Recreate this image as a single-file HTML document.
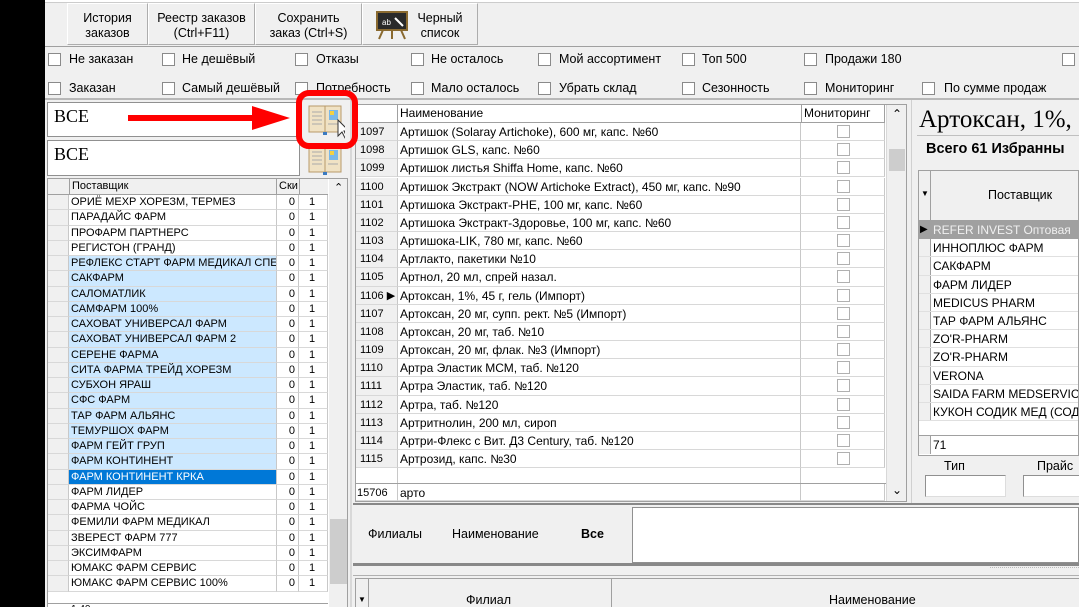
<!DOCTYPE html>
<html style="width:1079px;height:607px;overflow:hidden"><head><meta charset="utf-8"><style>
*{box-sizing:border-box;margin:0;padding:0}
body{width:1079px;height:607px;overflow:hidden;background:#000;font-family:"Liberation Sans","DejaVu Sans",sans-serif;font-size:12px;color:#000;position:relative}
.a{position:absolute}
.app{position:absolute;left:45px;top:0;width:1034px;height:607px;background:#f0f0f0;overflow:hidden}
.btn{position:absolute;top:3px;height:42px;background:#f0f0f0;border:1px solid #adadad;border-top-color:#fff;border-left-color:#fff;text-align:center;font-size:12.5px;line-height:15px;padding-top:7px;color:#000}
.cb{position:absolute;width:13px;height:13px;border:1px solid #8a8a8a;background:#fff}
.lbl{position:absolute;font-size:12.5px;white-space:nowrap}
.g{position:absolute;background:#fff;border:1px solid #a0a0a0;overflow:hidden}
.row{position:absolute;left:0;height:15.25px;font-size:11px;line-height:15px;white-space:nowrap}
.c{position:absolute;top:0;height:100%;border-right:1px solid #c8c8c8;border-bottom:1px solid #d8d8d8;overflow:hidden}
.mr{position:absolute;left:0;height:18.17px;line-height:18px;font-size:12px;white-space:nowrap}
.chk{position:absolute;width:13px;height:13px;border:1px solid #b0b0b0;background:#fff;left:36px;top:2px}
.rr{position:absolute;left:0;height:18.2px;line-height:18px;font-size:12px;white-space:nowrap;width:170px}
</style></head><body>
<div class="app">
<div class="a" style="left:0;top:0;width:1034px;height:3px;background:#fff;border-bottom:1px solid #ccc"></div>
<div class="btn" style="left:22px;width:81px">История<br>заказов</div>
<div class="btn" style="left:103px;width:107px">Реестр заказов<br>(Ctrl+F11)</div>
<div class="btn" style="left:210px;width:107px">Сохранить<br>заказ (Ctrl+S)</div>
<div class="btn" style="left:317px;width:116px;padding-left:40px">Черный<br>список</div>
<svg class="a" style="left:330px;top:10px" width="34" height="30"><rect x="2" y="2" width="30" height="18" fill="#2a2a2a" stroke="#8a6a30" stroke-width="2"/><text x="7" y="15" font-size="8" fill="#fff" font-family="Liberation Sans">ab</text><path d="M20 8l8 8" stroke="#fff" stroke-width="2"/><path d="M8 20l-4 9M26 20l4 9M17 20v9" stroke="#8a6a30" stroke-width="2"/></svg>
<div class="a" style="left:0;top:46px;width:1034px;height:1px;background:#a0a0a0"></div>

<div class="cb" style="left:3px;top:53px"></div><div class="lbl" style="left:24px;top:52px">Не заказан</div>
<div class="cb" style="left:117px;top:53px"></div><div class="lbl" style="left:137px;top:52px">Не дешёвый</div>
<div class="cb" style="left:250px;top:53px"></div><div class="lbl" style="left:271px;top:52px">Отказы</div>
<div class="cb" style="left:366px;top:53px"></div><div class="lbl" style="left:386px;top:52px">Не осталось</div>
<div class="cb" style="left:493px;top:53px"></div><div class="lbl" style="left:514px;top:52px">Мой ассортимент</div>
<div class="cb" style="left:637px;top:53px"></div><div class="lbl" style="left:657px;top:52px">Топ 500</div>
<div class="cb" style="left:759px;top:53px"></div><div class="lbl" style="left:780px;top:52px">Продажи 180</div>
<div class="cb" style="left:1017px;top:53px"></div>

<div class="cb" style="left:3px;top:82px"></div><div class="lbl" style="left:24px;top:81px">Заказан</div>
<div class="cb" style="left:117px;top:82px"></div><div class="lbl" style="left:137px;top:81px">Самый дешёвый</div>
<div class="cb" style="left:250px;top:82px"></div><div class="lbl" style="left:271px;top:81px">Потребность</div>
<div class="cb" style="left:366px;top:82px"></div><div class="lbl" style="left:386px;top:81px">Мало осталось</div>
<div class="cb" style="left:493px;top:82px"></div><div class="lbl" style="left:514px;top:81px">Убрать склад</div>
<div class="cb" style="left:637px;top:82px"></div><div class="lbl" style="left:657px;top:81px">Сезонность</div>
<div class="cb" style="left:759px;top:82px"></div><div class="lbl" style="left:780px;top:81px">Мониторинг</div>
<div class="cb" style="left:877px;top:82px"></div><div class="lbl" style="left:899px;top:81px">По сумме продаж</div>
<div class="a" style="left:0;top:98px;width:1034px;height:2px;background:#b8b8b8"></div>

<div class="a" style="left:2px;top:102px;width:253px;height:35px;background:#fff;border:1px solid #909090;font-family:'Liberation Serif',serif;font-size:18px;padding:3px 6px">ВСЕ</div>
<div class="a" style="left:2px;top:140px;width:253px;height:36px;background:#fff;border:1px solid #909090;font-family:'Liberation Serif',serif;font-size:18px;padding:3px 6px">ВСЕ</div>
<svg class="a" style="left:260px;top:102px" width="40" height="80">
<g><rect x="4" y="4" width="32" height="26" fill="#f0e2c4" stroke="#b79a6a"/><line x1="20" y1="4" x2="20" y2="30" stroke="#b79a6a"/><path d="M7 10h10M7 14h10M7 18h10M7 22h10M23 22h10" stroke="#aaa"/><rect x="24" y="8" width="9" height="10" fill="#7ab8e8"/><rect x="25" y="9" width="4" height="4" fill="#f5d040"/><rect x="18" y="30" width="4" height="3" fill="#3a7ac0"/></g>
<g transform="translate(0,40)"><rect x="4" y="4" width="32" height="26" fill="#f0e2c4" stroke="#b79a6a"/><line x1="20" y1="4" x2="20" y2="30" stroke="#b79a6a"/><path d="M7 10h10M7 14h10M7 18h10M7 22h10M23 22h10" stroke="#aaa"/><rect x="24" y="8" width="9" height="10" fill="#7ab8e8"/><rect x="25" y="9" width="4" height="4" fill="#f5d040"/><rect x="18" y="30" width="4" height="3" fill="#3a7ac0"/></g>
<path d="M33 18l0 16 4-4 3 6 2-1-3-6 5 0z" fill="#fff" stroke="#333"/>
</svg>

<div class="g" style="left:2px;top:178px;width:301px;height:432px">
<div class="a" style="left:0;top:0;width:280px;height:16px;background:#f0f0f0;border-bottom:1px solid #a0a0a0;font-size:11px;line-height:15px">
<span class="a" style="left:21px;top:0;width:208px;height:16px;border-left:1px solid #a0a0a0;border-right:1px solid #a0a0a0;padding-left:2px">Поставщик</span><span class="a" style="left:230px;padding-left:1px">Ски</span><span class="a" style="left:251px;top:0;height:16px;border-left:1px solid #a0a0a0"></span></div>
<div class="a" style="left:281px;top:0;width:19px;height:432px;background:#f0f0f0"><div class="a" style="left:5px;top:2px;font-size:11px">&#8963;</div><div class="a" style="left:1px;top:340px;width:17px;height:65px;background:#cdcdcd"></div></div>
<div class="a" style="left:0;top:16px;width:280px">
<div class="row" style="top:0"><span class="c" style="left:0;width:21px;background:#f0f0f0"></span><span class="c" style="left:21px;width:208px;padding-left:2px">ОРИЁ МЕХР ХОРЕЗМ, ТЕРМЕЗ</span><span class="c" style="left:229px;width:22px;text-align:right;padding-right:3px">0</span><span class="c" style="left:251px;width:29px;padding-left:10px">1</span></div>
<div class="row" style="top:15.25px"><span class="c" style="left:0;width:21px;background:#f0f0f0"></span><span class="c" style="left:21px;width:208px;padding-left:2px">ПАРАДАЙС ФАРМ</span><span class="c" style="left:229px;width:22px;text-align:right;padding-right:3px">0</span><span class="c" style="left:251px;width:29px;padding-left:10px">1</span></div>
<div class="row" style="top:30.5px"><span class="c" style="left:0;width:21px;background:#f0f0f0"></span><span class="c" style="left:21px;width:208px;padding-left:2px">ПРОФАРМ ПАРТНЕРС</span><span class="c" style="left:229px;width:22px;text-align:right;padding-right:3px">0</span><span class="c" style="left:251px;width:29px;padding-left:10px">1</span></div>
<div class="row" style="top:45.75px"><span class="c" style="left:0;width:21px;background:#f0f0f0"></span><span class="c" style="left:21px;width:208px;padding-left:2px">РЕГИСТОН (ГРАНД)</span><span class="c" style="left:229px;width:22px;text-align:right;padding-right:3px">0</span><span class="c" style="left:251px;width:29px;padding-left:10px">1</span></div>
<div class="row" style="top:61px"><span class="c" style="left:0;width:21px;background:#f0f0f0"></span><span class="c" style="left:21px;width:208px;padding-left:2px;background:#cce8ff">РЕФЛЕКС СТАРТ ФАРМ МЕДИКАЛ СПЕЦ</span><span class="c" style="left:229px;width:22px;text-align:right;padding-right:3px">0</span><span class="c" style="left:251px;width:29px;padding-left:10px">1</span></div>
<div class="row" style="top:76.25px"><span class="c" style="left:0;width:21px;background:#f0f0f0"></span><span class="c" style="left:21px;width:208px;padding-left:2px;background:#cce8ff">САКФАРМ</span><span class="c" style="left:229px;width:22px;text-align:right;padding-right:3px">0</span><span class="c" style="left:251px;width:29px;padding-left:10px">1</span></div>
<div class="row" style="top:91.5px"><span class="c" style="left:0;width:21px;background:#f0f0f0"></span><span class="c" style="left:21px;width:208px;padding-left:2px;background:#cce8ff">САЛОМАТЛИК</span><span class="c" style="left:229px;width:22px;text-align:right;padding-right:3px">0</span><span class="c" style="left:251px;width:29px;padding-left:10px">1</span></div>
<div class="row" style="top:106.75px"><span class="c" style="left:0;width:21px;background:#f0f0f0"></span><span class="c" style="left:21px;width:208px;padding-left:2px;background:#cce8ff">САМФАРМ 100%</span><span class="c" style="left:229px;width:22px;text-align:right;padding-right:3px">0</span><span class="c" style="left:251px;width:29px;padding-left:10px">1</span></div>
<div class="row" style="top:122px"><span class="c" style="left:0;width:21px;background:#f0f0f0"></span><span class="c" style="left:21px;width:208px;padding-left:2px;background:#cce8ff">САХОВАТ УНИВЕРСАЛ ФАРМ</span><span class="c" style="left:229px;width:22px;text-align:right;padding-right:3px">0</span><span class="c" style="left:251px;width:29px;padding-left:10px">1</span></div>
<div class="row" style="top:137.25px"><span class="c" style="left:0;width:21px;background:#f0f0f0"></span><span class="c" style="left:21px;width:208px;padding-left:2px;background:#cce8ff">САХОВАТ УНИВЕРСАЛ ФАРМ 2</span><span class="c" style="left:229px;width:22px;text-align:right;padding-right:3px">0</span><span class="c" style="left:251px;width:29px;padding-left:10px">1</span></div>
<div class="row" style="top:152.5px"><span class="c" style="left:0;width:21px;background:#f0f0f0"></span><span class="c" style="left:21px;width:208px;padding-left:2px;background:#cce8ff">СЕРЕНЕ ФАРМА</span><span class="c" style="left:229px;width:22px;text-align:right;padding-right:3px">0</span><span class="c" style="left:251px;width:29px;padding-left:10px">1</span></div>
<div class="row" style="top:167.75px"><span class="c" style="left:0;width:21px;background:#f0f0f0"></span><span class="c" style="left:21px;width:208px;padding-left:2px;background:#cce8ff">СИТА ФАРМА ТРЕЙД ХОРЕЗМ</span><span class="c" style="left:229px;width:22px;text-align:right;padding-right:3px">0</span><span class="c" style="left:251px;width:29px;padding-left:10px">1</span></div>
<div class="row" style="top:183px"><span class="c" style="left:0;width:21px;background:#f0f0f0"></span><span class="c" style="left:21px;width:208px;padding-left:2px;background:#cce8ff">СУБХОН ЯРАШ</span><span class="c" style="left:229px;width:22px;text-align:right;padding-right:3px">0</span><span class="c" style="left:251px;width:29px;padding-left:10px">1</span></div>
<div class="row" style="top:198.25px"><span class="c" style="left:0;width:21px;background:#f0f0f0"></span><span class="c" style="left:21px;width:208px;padding-left:2px;background:#cce8ff">СФС ФАРМ</span><span class="c" style="left:229px;width:22px;text-align:right;padding-right:3px">0</span><span class="c" style="left:251px;width:29px;padding-left:10px">1</span></div>
<div class="row" style="top:213.5px"><span class="c" style="left:0;width:21px;background:#f0f0f0"></span><span class="c" style="left:21px;width:208px;padding-left:2px;background:#cce8ff">ТАР ФАРМ АЛЬЯНС</span><span class="c" style="left:229px;width:22px;text-align:right;padding-right:3px">0</span><span class="c" style="left:251px;width:29px;padding-left:10px">1</span></div>
<div class="row" style="top:228.75px"><span class="c" style="left:0;width:21px;background:#f0f0f0"></span><span class="c" style="left:21px;width:208px;padding-left:2px;background:#cce8ff">ТЕМУРШОХ ФАРМ</span><span class="c" style="left:229px;width:22px;text-align:right;padding-right:3px">0</span><span class="c" style="left:251px;width:29px;padding-left:10px">1</span></div>
<div class="row" style="top:244px"><span class="c" style="left:0;width:21px;background:#f0f0f0"></span><span class="c" style="left:21px;width:208px;padding-left:2px;background:#cce8ff">ФАРМ ГЕЙТ ГРУП</span><span class="c" style="left:229px;width:22px;text-align:right;padding-right:3px">0</span><span class="c" style="left:251px;width:29px;padding-left:10px">1</span></div>
<div class="row" style="top:259.25px"><span class="c" style="left:0;width:21px;background:#f0f0f0"></span><span class="c" style="left:21px;width:208px;padding-left:2px;background:#cce8ff">ФАРМ КОНТИНЕНТ</span><span class="c" style="left:229px;width:22px;text-align:right;padding-right:3px">0</span><span class="c" style="left:251px;width:29px;padding-left:10px">1</span></div>
<div class="row" style="top:274.5px"><span class="c" style="left:0;width:21px;background:#f0f0f0"></span><span class="c" style="left:21px;width:208px;padding-left:2px;background:#0078d7;color:#fff">ФАРМ КОНТИНЕНТ КРКА</span><span class="c" style="left:229px;width:22px;text-align:right;padding-right:3px">0</span><span class="c" style="left:251px;width:29px;padding-left:10px">1</span></div>
<div class="row" style="top:289.75px"><span class="c" style="left:0;width:21px;background:#f0f0f0"></span><span class="c" style="left:21px;width:208px;padding-left:2px">ФАРМ ЛИДЕР</span><span class="c" style="left:229px;width:22px;text-align:right;padding-right:3px">0</span><span class="c" style="left:251px;width:29px;padding-left:10px">1</span></div>
<div class="row" style="top:305px"><span class="c" style="left:0;width:21px;background:#f0f0f0"></span><span class="c" style="left:21px;width:208px;padding-left:2px">ФАРМА ЧОЙС</span><span class="c" style="left:229px;width:22px;text-align:right;padding-right:3px">0</span><span class="c" style="left:251px;width:29px;padding-left:10px">1</span></div>
<div class="row" style="top:320.25px"><span class="c" style="left:0;width:21px;background:#f0f0f0"></span><span class="c" style="left:21px;width:208px;padding-left:2px">ФЕМИЛИ ФАРМ МЕДИКАЛ</span><span class="c" style="left:229px;width:22px;text-align:right;padding-right:3px">0</span><span class="c" style="left:251px;width:29px;padding-left:10px">1</span></div>
<div class="row" style="top:335.5px"><span class="c" style="left:0;width:21px;background:#f0f0f0"></span><span class="c" style="left:21px;width:208px;padding-left:2px">ЗВЕРЕСТ ФАРМ 777</span><span class="c" style="left:229px;width:22px;text-align:right;padding-right:3px">0</span><span class="c" style="left:251px;width:29px;padding-left:10px">1</span></div>
<div class="row" style="top:350.75px"><span class="c" style="left:0;width:21px;background:#f0f0f0"></span><span class="c" style="left:21px;width:208px;padding-left:2px">ЭКСИМФАРМ</span><span class="c" style="left:229px;width:22px;text-align:right;padding-right:3px">0</span><span class="c" style="left:251px;width:29px;padding-left:10px">1</span></div>
<div class="row" style="top:366px"><span class="c" style="left:0;width:21px;background:#f0f0f0"></span><span class="c" style="left:21px;width:208px;padding-left:2px">ЮМАКС ФАРМ СЕРВИС</span><span class="c" style="left:229px;width:22px;text-align:right;padding-right:3px">0</span><span class="c" style="left:251px;width:29px;padding-left:10px">1</span></div>
<div class="row" style="top:381.25px"><span class="c" style="left:0;width:21px;background:#f0f0f0"></span><span class="c" style="left:21px;width:208px;padding-left:2px">ЮМАКС ФАРМ СЕРВИС 100%</span><span class="c" style="left:229px;width:22px;text-align:right;padding-right:3px">0</span><span class="c" style="left:251px;width:29px;padding-left:10px">1</span></div>
<div class="a" style="left:0;top:408px;width:280px;height:12px;border-top:1px solid #a0a0a0;font-size:10px;padding-left:23px">1 40</div>
</div>
</div>
<div class="a" style="left:305px;top:100px;width:2px;height:507px;background:#d8d8d8"></div>

<div class="g" style="left:310px;top:104px;width:552px;height:398px">
<div class="a" style="left:0;top:0;width:529px;height:18px;background:#fff;border-bottom:1px solid #a0a0a0;font-size:12px;line-height:17px">
<span class="a" style="left:41px;height:18px;border-left:1px solid #a0a0a0;padding-left:2px">Наименование</span>
<span class="a" style="left:445px;width:84px;height:18px;border-left:1px solid #a0a0a0;border-right:1px solid #a0a0a0;padding-left:2px">Мониторинг</span></div>
<div class="a" style="left:530px;top:0;width:20px;height:396px;background:#f0f0f0;border-left:1px solid #d8d8d8"><div class="a" style="left:5px;top:2px;font-size:12px">&#8963;</div><div class="a" style="left:2px;top:44px;width:16px;height:22px;background:#cdcdcd"></div><div class="a" style="left:5px;top:378px;font-size:12px">&#8964;</div></div>
<div class="a" style="left:0;top:18px;width:530px">
<div class="mr" style="top:0"><span class="c" style="left:0;width:42px;background:#f0f0f0;font-size:11px;padding-left:4px">1097</span><span class="c" style="left:42px;width:403px;padding-left:2px">Артишок (Solaray Artichoke), 600 мг, капс. №60</span><span class="c" style="left:445px;width:84px"><i class="chk"></i></span></div>
<div class="mr" style="top:18.17px"><span class="c" style="left:0;width:42px;background:#f0f0f0;font-size:11px;padding-left:4px">1098</span><span class="c" style="left:42px;width:403px;padding-left:2px">Артишок GLS, капс. №60</span><span class="c" style="left:445px;width:84px"><i class="chk"></i></span></div>
<div class="mr" style="top:36.34px"><span class="c" style="left:0;width:42px;background:#f0f0f0;font-size:11px;padding-left:4px">1099</span><span class="c" style="left:42px;width:403px;padding-left:2px">Артишок листья Shiffa Home, капс. №60</span><span class="c" style="left:445px;width:84px"><i class="chk"></i></span></div>
<div class="mr" style="top:54.51px"><span class="c" style="left:0;width:42px;background:#f0f0f0;font-size:11px;padding-left:4px">1100</span><span class="c" style="left:42px;width:403px;padding-left:2px">Артишок Экстракт (NOW Artichoke Extract), 450 мг, капс. №90</span><span class="c" style="left:445px;width:84px"><i class="chk"></i></span></div>
<div class="mr" style="top:72.68px"><span class="c" style="left:0;width:42px;background:#f0f0f0;font-size:11px;padding-left:4px">1101</span><span class="c" style="left:42px;width:403px;padding-left:2px">Артишока Экстракт-РНЕ, 100 мг, капс. №60</span><span class="c" style="left:445px;width:84px"><i class="chk"></i></span></div>
<div class="mr" style="top:90.85px"><span class="c" style="left:0;width:42px;background:#f0f0f0;font-size:11px;padding-left:4px">1102</span><span class="c" style="left:42px;width:403px;padding-left:2px">Артишока Экстракт-Здоровье, 100 мг, капс. №60</span><span class="c" style="left:445px;width:84px"><i class="chk"></i></span></div>
<div class="mr" style="top:109.02px"><span class="c" style="left:0;width:42px;background:#f0f0f0;font-size:11px;padding-left:4px">1103</span><span class="c" style="left:42px;width:403px;padding-left:2px">Артишока-LIK, 780 мг, капс. №60</span><span class="c" style="left:445px;width:84px"><i class="chk"></i></span></div>
<div class="mr" style="top:127.19px"><span class="c" style="left:0;width:42px;background:#f0f0f0;font-size:11px;padding-left:4px">1104</span><span class="c" style="left:42px;width:403px;padding-left:2px">Артлакто, пакетики №10</span><span class="c" style="left:445px;width:84px"><i class="chk"></i></span></div>
<div class="mr" style="top:145.36px"><span class="c" style="left:0;width:42px;background:#f0f0f0;font-size:11px;padding-left:4px">1105</span><span class="c" style="left:42px;width:403px;padding-left:2px">Артнол, 20 мл, спрей назал.</span><span class="c" style="left:445px;width:84px"><i class="chk"></i></span></div>
<div class="mr" style="top:163.53px"><span class="c" style="left:0;width:42px;background:#f0f0f0;font-size:11px;padding-left:4px">1106 &#9654;</span><span class="c" style="left:42px;width:403px;padding-left:2px">Артоксан, 1%, 45 г, гель (Импорт)</span><span class="c" style="left:445px;width:84px"><i class="chk"></i></span></div>
<div class="mr" style="top:181.7px"><span class="c" style="left:0;width:42px;background:#f0f0f0;font-size:11px;padding-left:4px">1107</span><span class="c" style="left:42px;width:403px;padding-left:2px">Артоксан, 20 мг, супп. рект. №5 (Импорт)</span><span class="c" style="left:445px;width:84px"><i class="chk"></i></span></div>
<div class="mr" style="top:199.87px"><span class="c" style="left:0;width:42px;background:#f0f0f0;font-size:11px;padding-left:4px">1108</span><span class="c" style="left:42px;width:403px;padding-left:2px">Артоксан, 20 мг, таб. №10</span><span class="c" style="left:445px;width:84px"><i class="chk"></i></span></div>
<div class="mr" style="top:218.04px"><span class="c" style="left:0;width:42px;background:#f0f0f0;font-size:11px;padding-left:4px">1109</span><span class="c" style="left:42px;width:403px;padding-left:2px">Артоксан, 20 мг, флак. №3 (Импорт)</span><span class="c" style="left:445px;width:84px"><i class="chk"></i></span></div>
<div class="mr" style="top:236.21px"><span class="c" style="left:0;width:42px;background:#f0f0f0;font-size:11px;padding-left:4px">1110</span><span class="c" style="left:42px;width:403px;padding-left:2px">Артра Эластик МСМ, таб. №120</span><span class="c" style="left:445px;width:84px"><i class="chk"></i></span></div>
<div class="mr" style="top:254.38px"><span class="c" style="left:0;width:42px;background:#f0f0f0;font-size:11px;padding-left:4px">1111</span><span class="c" style="left:42px;width:403px;padding-left:2px">Артра Эластик, таб. №120</span><span class="c" style="left:445px;width:84px"><i class="chk"></i></span></div>
<div class="mr" style="top:272.55px"><span class="c" style="left:0;width:42px;background:#f0f0f0;font-size:11px;padding-left:4px">1112</span><span class="c" style="left:42px;width:403px;padding-left:2px">Артра, таб. №120</span><span class="c" style="left:445px;width:84px"><i class="chk"></i></span></div>
<div class="mr" style="top:290.72px"><span class="c" style="left:0;width:42px;background:#f0f0f0;font-size:11px;padding-left:4px">1113</span><span class="c" style="left:42px;width:403px;padding-left:2px">Артритнолин, 200 мл, сироп</span><span class="c" style="left:445px;width:84px"><i class="chk"></i></span></div>
<div class="mr" style="top:308.89px"><span class="c" style="left:0;width:42px;background:#f0f0f0;font-size:11px;padding-left:4px">1114</span><span class="c" style="left:42px;width:403px;padding-left:2px">Артри-Флекс с Вит. Д3 Century, таб. №120</span><span class="c" style="left:445px;width:84px"><i class="chk"></i></span></div>
<div class="mr" style="top:327.06px"><span class="c" style="left:0;width:42px;background:#f0f0f0;font-size:11px;padding-left:4px">1115</span><span class="c" style="left:42px;width:403px;padding-left:2px">Артрозид, капс. №30</span><span class="c" style="left:445px;width:84px"><i class="chk"></i></span></div>
<div class="mr" style="top:345.23px;width:530px"><span class="c" style="left:0;width:42px;border-bottom:none"></span><span class="c" style="left:42px;width:403px;border-bottom:none"></span></div>
<div class="mr" style="top:360px;width:530px;border-top:1px solid #a0a0a0"><span class="c" style="left:0;width:42px;font-size:11px;padding-left:1px">15706</span><span class="c" style="left:42px;width:403px;padding-left:2px">арто</span><span class="c" style="left:445px;width:84px"></span></div>
</div>
</div>

<div class="a" style="left:866px;top:100px;width:4px;height:405px;background:#f0f0f0;border-left:1px solid #d0d0d0"></div>
<div class="a" style="left:874px;top:106px;font-family:'Liberation Serif',serif;font-size:25px;white-space:nowrap">Артоксан, 1%,</div>
<div class="a" style="left:872px;top:135px;width:162px;height:1px;background:#c0c0c0"></div>
<div class="a" style="left:881px;top:141px;font-size:14.5px;font-weight:bold;white-space:nowrap">Всего 61 Избранны</div>
<div class="a" style="left:873px;top:170px;width:161px;height:286px;background:#fff;border:1px solid #a0a0a0;overflow:hidden">
<div class="a" style="left:0;top:0;width:170px;height:50px;background:#f0f0f0;border-bottom:1px solid #a0a0a0"><span class="a" style="left:2px;top:18px;font-size:8px">&#9660;</span><span class="a" style="left:11px;top:0;height:50px;border-left:1px solid #a0a0a0"></span><span class="a" style="left:69px;top:17px;font-size:12.5px">Поставщик</span></div>
<div class="a" style="left:0;top:50px;width:12px;height:200px;background:#f0f0f0;border-right:1px solid #a0a0a0"></div>
<div class="rr" style="top:50px;background:#a0a0a0;color:#f0f0f0;padding-left:14px"><span class="a" style="left:1px;color:#000;font-size:10px">&#9654;</span>REFER INVEST Оптовая</div>
<div class="rr" style="top:68.2px;padding-left:14px;border-bottom:1px solid #e0e0e0">ИННОПЛЮС ФАРМ</div>
<div class="rr" style="top:86.4px;padding-left:14px;border-bottom:1px solid #e0e0e0">САКФАРМ</div>
<div class="rr" style="top:104.6px;padding-left:14px;border-bottom:1px solid #e0e0e0">ФАРМ ЛИДЕР</div>
<div class="rr" style="top:122.8px;padding-left:14px;border-bottom:1px solid #e0e0e0">MEDICUS PHARM</div>
<div class="rr" style="top:141px;padding-left:14px;border-bottom:1px solid #e0e0e0">ТАР ФАРМ АЛЬЯНС</div>
<div class="rr" style="top:159.2px;padding-left:14px;border-bottom:1px solid #e0e0e0">ZO'R-PHARM</div>
<div class="rr" style="top:177.4px;padding-left:14px;border-bottom:1px solid #e0e0e0">ZO'R-PHARM</div>
<div class="rr" style="top:195.6px;padding-left:14px;border-bottom:1px solid #e0e0e0">VERONA</div>
<div class="rr" style="top:213.8px;padding-left:14px;border-bottom:1px solid #e0e0e0">SAIDA FARM MEDSERVICE</div>
<div class="rr" style="top:232px;padding-left:14px;border-bottom:1px solid #e0e0e0">КУКОН СОДИК МЕД (СОДИК)</div>
<div class="rr" style="top:264px;padding-left:14px;border-top:1px solid #a0a0a0"><span class="a" style="left:0;top:0;width:12px;height:18px;background:#f0f0f0;border-right:1px solid #a0a0a0"></span>71</div>
</div>
<div class="a" style="left:899px;top:459px;font-size:12.5px">Тип</div>
<div class="a" style="left:992px;top:459px;font-size:12.5px">Прайс</div>
<div class="a" style="left:880px;top:475px;width:81px;height:22px;background:#fff;border:1px solid #909090;border-right-color:#ddd;border-bottom-color:#ddd"></div>
<div class="a" style="left:978px;top:475px;width:60px;height:22px;background:#fff;border:1px solid #909090;border-bottom-color:#ddd"></div>

<div class="a" style="left:308px;top:503px;width:726px;height:2px;background:#888"></div>
<div class="a" style="left:323px;top:527px;font-size:12.5px">Филиалы</div>
<div class="a" style="left:407px;top:527px;font-size:12.5px">Наименование</div>
<div class="a" style="left:536px;top:527px;font-size:12.5px;font-weight:bold">Все</div>
<div class="a" style="left:587px;top:507px;width:447px;height:56px;background:#fff;border:1px solid #909090"></div>
<div class="a" style="left:308px;top:563px;width:726px;height:3px;background:#888"></div>
<div class="a" style="left:945px;top:567px;width:89px;height:3px;border-top:1px dotted #bbb"></div>
<div class="a" style="left:308px;top:575px;width:726px;height:1px;background:#b0b0b0"></div>
<div class="a" style="left:310px;top:578px;width:724px;height:29px;background:#f0f0f0;border-left:1px solid #a0a0a0;border-top:1px solid #a0a0a0">
<span class="a" style="left:2px;top:16px;font-size:8px">&#9660;</span><span class="a" style="left:12px;top:0;height:29px;border-left:1px solid #a0a0a0"></span>
<span class="a" style="left:110px;top:14px;font-size:12.5px">Филиал</span><span class="a" style="left:255px;top:0;height:29px;border-left:1px solid #a0a0a0"></span>
<span class="a" style="left:473px;top:14px;font-size:12.5px">Наименование</span></div>
</div>

<svg class="a" style="left:0;top:0" width="1079" height="607">
<path d="M128 115h124v-9l38 12-38 12v-9H128z" fill="#f00"/>
<rect x="299" y="93" width="56" height="53" rx="10" fill="none" stroke="#f00" stroke-width="6"/>
</svg>
</body></html>
